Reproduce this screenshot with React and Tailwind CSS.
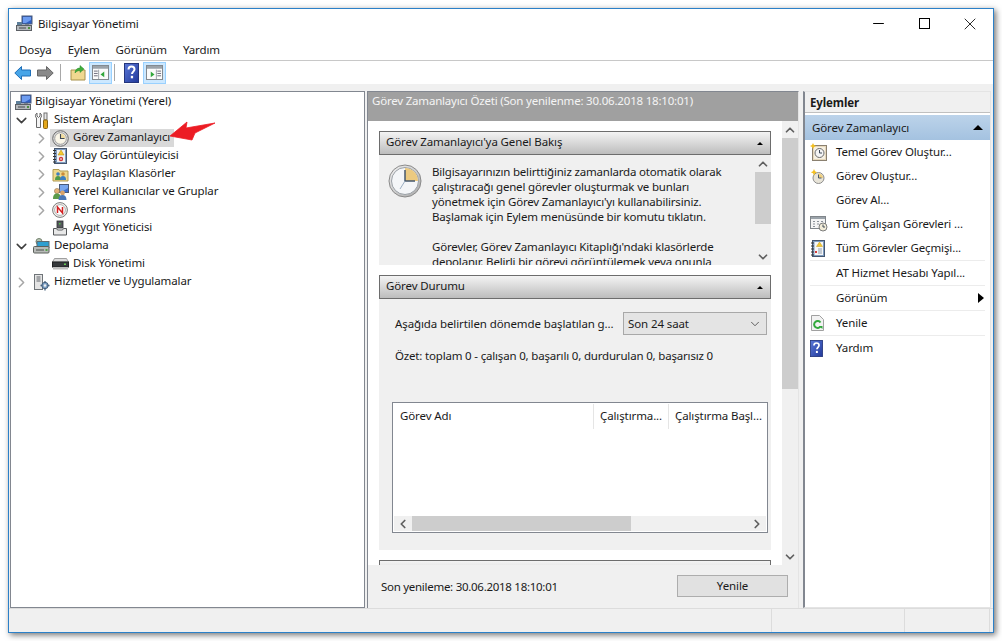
import React from "react";
import { ChevronRight, ChevronDown, ChevronUp, ChevronLeft, Minus, X } from "lucide-react";

const ComputerIcon = () => (
  <svg width="17" height="17" viewBox="0 0 17 17">
    <rect x="6" y="1" width="10" height="8" fill="#2f5fc4" stroke="#4a5a78" />
    <path d="M7 2h8v3l-5 3H7z" fill="#6d9cf0" />
    <rect x="9" y="9" width="4" height="2" fill="#7a8490" />
    <rect x="1" y="7" width="5" height="3" fill="#5d7f9a" />
    <rect x="0.5" y="10.5" width="15" height="5" fill="#b4b8bc" stroke="#5c6065" />
    <path d="M3 13h7" stroke="#44484c" />
    <rect x="12" y="12" width="2" height="2" fill="#4c8f3f" />
  </svg>
);

const ToolsIcon = () => (
  <svg width="16" height="17" viewBox="0 0 16 17">
    <path d="M3 1v3l1.500 1.500L6 4V1c2 1 2 4 .5 5v9.500h-4V6C1 5 1 2 3 1z" fill="#f4f4f4" stroke="#6a6a6a" />
    <rect x="10" y="1" width="3" height="7" fill="#e8e8e8" stroke="#707070" />
    <rect x="9.500" y="8" width="4" height="8.500" rx="1" fill="#e5a81c" stroke="#8a6510" />
  </svg>
);

const ClockIcon = () => (
  <svg width="17" height="17" viewBox="0 0 17 17">
    <circle cx="8.500" cy="8.500" r="7.800" fill="#dcdcdc" stroke="#6b6b6b" />
    <circle cx="8.500" cy="8.500" r="5.800" fill="#faf6e8" stroke="#a0a0a0" />
    <path d="M8.500 8.500V3.700A4.800 4.800 0 0 1 13.300 8.500z" fill="#f0dca0" />
    <path d="M8.500 4v4.500H12.500" fill="none" stroke="#3f4a58" strokeWidth="1.100" />
  </svg>
);

const EventIcon = () => (
  <svg width="16" height="16" viewBox="0 0 16 16">
    <rect x="2.500" y="0.500" width="12" height="15" fill="#7f9cc0" stroke="#45566e" />
    <rect x="5" y="2" width="8" height="12" fill="#f2f2f2" />
    <path d="M1 2.500h3M1 5.500h3M1 8.500h3M1 11.500h3M1 14h3" stroke="#333" />
    <path d="M9 2l3 5H6z" fill="#f6ca2e" stroke="#b08a10" strokeWidth="0.500" />
    <circle cx="9" cy="11" r="2.200" fill="#d23b3b" />
    <path d="M8 11h2" stroke="#fff" />
  </svg>
);

const HistoryIcon = () => (
  <svg width="16" height="17" viewBox="0 0 16 17">
    <rect x="2.500" y="0.500" width="12" height="16" fill="#7f9cc0" stroke="#45566e" />
    <rect x="4.500" y="2" width="8.500" height="13" fill="#f6f6f6" />
    <path d="M1 3h3M1 6h3M1 9h3M1 12h3M1 15h3" stroke="#333" />
    <path d="M9.500 2l3 4.500h-6z" fill="#f6ca2e" stroke="#c09a20" strokeWidth="0.500" />
    <path d="M8 9h4M8 11h4M8 13h4" stroke="#8c9cb0" />
    <rect x="5" y="11" width="2" height="2" fill="#d23b3b" />
  </svg>
);

const BasicTaskIcon = () => (
  <svg width="17" height="18" viewBox="0 0 17 18">
    <rect x="2.500" y="2.500" width="14" height="15" fill="#e6d8bc" stroke="#8a8070" />
    <rect x="4" y="4" width="11" height="12" fill="#f6f0e2" />
    <circle cx="9.500" cy="10" r="4.500" fill="#f4f4f4" stroke="#6b6b6b" />
    <path d="M9.500 7v3h2.500" fill="none" stroke="#3f4a58" />
    <path d="M3 0l1 2 2 1-2 1-1 2-1-2-2-1 2-1z" fill="#f4c020" />
  </svg>
);

const NewTaskIcon = () => (
  <svg width="16" height="17" viewBox="0 0 16 17">
    <circle cx="8.500" cy="10" r="5.500" fill="#e8e4d8" stroke="#8d8d8d" />
    <path d="M8.500 10V5.500A4.500 4.500 0 0 1 13 10z" fill="#f0d080" />
    <path d="M8.500 6.500V10h3" fill="none" stroke="#4a5868" />
    <path d="M4 1l1 2.200 2.200 1-2.200 1L4 7.500 3 5.200l-2.200-1 2.200-1z" fill="#f4c020" />
  </svg>
);

const RunningIcon = () => (
  <svg width="18" height="16" viewBox="0 0 18 16">
    <rect x="0.500" y="0.500" width="15" height="12" fill="#f4f4f4" stroke="#80858a" />
    <rect x="1" y="1" width="14" height="2" fill="#9ba3aa" />
    <path d="M3 5.500h2M7 5.500h2M11 5.500h2M3 8h2M7 8h2M3 10.500h2" stroke="#8a9098" />
    <circle cx="13" cy="11" r="4" fill="#f2ecd8" stroke="#7d7d7d" />
    <path d="M13 8.500V11h2" fill="none" stroke="#3f4a58" />
  </svg>
);

const RefreshIcon = () => (
  <svg width="15" height="16" viewBox="0 0 15 16">
    <path d="M1.500 0.500h8l4 4v11h-12z" fill="#f2f2f2" stroke="#a0a0a0" />
    <path d="M10.500 7.500a3.500 3.500 0 1 0 0 4" fill="none" stroke="#32a83c" strokeWidth="2" />
    <path d="M8.500 11h4v3z" fill="#32a83c" />
  </svg>
);

const SharedIcon = () => (
  <svg width="17" height="16" viewBox="0 0 17 16">
    <path d="M1 3.500h6l1 1.500h8v10H1z" fill="#efd88c" stroke="#b09a50" />
    <circle cx="6" cy="8" r="1.800" fill="#3d7fc0" />
    <path d="M3 14c0-3 1-4 3-4s3 1 3 4z" fill="#4f9a4a" />
    <circle cx="11" cy="8" r="1.800" fill="#c98a3a" />
    <path d="M8 14c0-3 1-4 3-4s3 1 3 4z" fill="#3d7fc0" />
  </svg>
);

const UsersIcon = () => (
  <svg width="17" height="17" viewBox="0 0 17 17">
    <rect x="7.500" y="0.500" width="9" height="8" fill="#3f72d0" stroke="#4a5a78" />
    <path d="M8 1h8v3l-5 3H8z" fill="#78a6ee" />
    <circle cx="5" cy="7" r="2.600" fill="#e2b27a" stroke="#8a6a42" strokeWidth="0.500" />
    <path d="M1 15c0-4 1.500-5.500 4-5.500S9 11 9 15z" fill="#5a9a4a" />
    <circle cx="10.500" cy="9" r="2.400" fill="#d8a46c" />
    <path d="M6.500 16c0-3.500 1.500-5 4-5s4 1.500 4 5z" fill="#4a78b8" />
  </svg>
);

const PerfIcon = () => (
  <svg width="16" height="16" viewBox="0 0 16 16">
    <circle cx="8" cy="8" r="7.400" fill="#f4f4f0" stroke="#7a7a7a" />
    <circle cx="8" cy="8" r="5.400" fill="#fff" stroke="#b0b0b0" />
    <path d="M5.500 11V5l5 6V5" fill="none" stroke="#d42020" strokeWidth="1.500" />
  </svg>
);

const DeviceIcon = () => (
  <svg width="16" height="16" viewBox="0 0 16 16">
    <rect x="5" y="1" width="6" height="7" fill="#55585c" stroke="#2e3033" strokeWidth="0.800" />
    <rect x="7" y="3" width="1.500" height="1.500" fill="#52c04a" />
    <path d="M1.500 8.500h3l1 1.500h5l1-1.500h3v6.500h-13z" fill="#e8e8e8" stroke="#54575a" />
  </svg>
);

const StorageIcon = () => (
  <svg width="17" height="16" viewBox="0 0 17 16">
    <circle cx="6" cy="3.500" r="3" fill="#b8c8b4" stroke="#74806f" />
    <rect x="4" y="3.500" width="12" height="6" fill="#2f9fd0" stroke="#5f6a70" />
    <rect x="0.500" y="8.500" width="15.500" height="6.500" rx="1" fill="#b8bbb8" stroke="#5c605c" />
    <path d="M3 12h8" stroke="#4a4e4a" />
    <rect x="12.500" y="11" width="2" height="2" fill="#56a04a" />
  </svg>
);

const DiskIcon = () => (
  <svg width="17" height="16" viewBox="0 0 17 16">
    <path d="M2.500 2.500h12l2 3.500H.5z" fill="#dcdcdc" stroke="#8a8a8a" strokeWidth="0.800" />
    <rect x="0.500" y="6" width="16" height="5" fill="#36393c" stroke="#1f2022" />
    <rect x="12" y="7.500" width="2" height="1.500" fill="#66cc55" />
    <rect x="1" y="11" width="15" height="2.500" fill="#bfbfbf" />
  </svg>
);

const ServicesIcon = () => (
  <svg width="16" height="17" viewBox="0 0 16 17">
    <rect x="0.500" y="0.500" width="8" height="15" fill="#e4e4e4" stroke="#6f7478" />
    <path d="M2.500 3h4M2.500 5h4M2.500 7h4" stroke="#62676c" />
    <circle cx="11" cy="11.500" r="3.200" fill="#7ea0c4" stroke="#46607c" />
    <circle cx="11" cy="11.500" r="1.200" fill="#f0f0f0" />
    <path d="M11 7v2M11 14v2.500M6.500 11.500h2M13.500 11.500h2" stroke="#46607c" strokeWidth="1.300" />
  </svg>
);

const HelpIcon = ({ w = 15, h = 20 }) => (
  <svg width={w} height={h} viewBox="0 0 15 20">
    <defs>
      <linearGradient id="helpFill" x1="0" y1="0" x2="1" y2="1">
        <stop offset="0" stopColor="#5a78d8" />
        <stop offset="1" stopColor="#22399a" />
      </linearGradient>
    </defs>
    <rect x="0.500" y="0.500" width="14" height="19" fill="url(#helpFill)" stroke="#24357c" />
    <path d="M4.500 6.500c0-2 1.300-3 3-3s3 1 3 2.800c0 2.200-2.500 2.400-2.500 4.700" fill="none" stroke="#fff" strokeWidth="2" />
    <rect x="6.800" y="12.800" width="2.300" height="2.500" fill="#fff" />
  </svg>
);

const PaneIcon = ({ flip }) => (
  <svg width="17" height="15" viewBox="0 0 18 16">
    <rect x="0.500" y="0.500" width="17" height="15" fill="#fbfbfb" stroke="#7c8288" />
    <rect x="1" y="1" width="16" height="3" fill="#9ba3aa" />
    {flip ? (
      <>
        <path d="M5 7v6l4-3z" fill="#32a83c" />
        <path d="M12 6.500h4M12 9h4M12 11.500h4" stroke="#667" />
        <path d="M11 5v10" stroke="#9aa0a6" />
      </>
    ) : (
      <>
        <path d="M13 7v6l-4-3z" fill="#32a83c" />
        <path d="M2 6.500h4M2 9h4M2 11.500h4" stroke="#667" />
        <path d="M7 5v10" stroke="#9aa0a6" />
      </>
    )}
  </svg>
);

const BigClock = () => (
  <svg width="34" height="34" viewBox="0 0 34 34">
    <defs>
      <linearGradient id="rimFill" x1="0" y1="0" x2="1" y2="1">
        <stop offset="0" stopColor="#f4f4f4" />
        <stop offset="1" stopColor="#a8a8a8" />
      </linearGradient>
    </defs>
    <circle cx="17" cy="17" r="16" fill="url(#rimFill)" stroke="#8a8a8a" />
    <circle cx="17" cy="17" r="13.500" fill="#f4f6f8" stroke="#9aa0a6" />
    <path d="M17 17V4A13 13 0 0 1 30 17z" fill="#ecca80" />
    <path d="M17 6v11h10" fill="none" stroke="#46586c" strokeWidth="1.500" />
    <path d="M17 17l-5 8" stroke="#9cb0c4" strokeWidth="1" />
  </svg>
);

const TreeRow = ({ level, open, arrow, icon, label, selected }) => (
  <div className={level === 0 ? "flex h-[18px] items-center pl-[3px]" : level === 1 ? "flex h-[18px] items-center pl-[5px]" : "flex h-[18px] items-center pl-[25px]"}>
    {level > 0 && (
      <span className="flex w-[10px] shrink-0 justify-center">
        {arrow && (open ? <ChevronDown size={17} strokeWidth={2.2} className="shrink-0 text-[#404040]" /> : <ChevronRight size={17} strokeWidth={2.2} className="shrink-0 text-[#a6a6a6]" />)}
      </span>
    )}
    <span className={level === 2 ? "ml-[4px] flex h-[18px] items-center" : "ml-[1px] flex h-[18px] items-center"}>
      <span className={selected ? "flex h-[18px] items-center bg-[#d9d9d9] pr-[4px]" : "flex h-[18px] items-center"}>
        <span className={level === 0 ? "flex w-[17px] justify-center" : level === 1 ? "ml-[5px] flex w-[19px] justify-center" : "ml-[1px] flex w-[18px] justify-center"}>{icon}</span>
        <span className={level === 2 ? "ml-[4px] pb-[2px]" : "ml-[3px] pb-[2px]"}>{label}</span>
      </span>
    </span>
  </div>
);

const ActionRow = ({ icon, label, line, more }) => (
  <div className={line ? "mx-[5px] flex h-[25px] items-center border-b border-[#ececec]" : "mx-[5px] flex h-[24px] items-center"}>
    <span className="flex w-[26px] justify-start">{icon}</span>
    <span className="flex-1 whitespace-nowrap">{label}</span>
    {more && <span className="mr-[1px] h-0 w-0 border-y-[5px] border-l-[6px] border-y-transparent border-l-black" />}
  </div>
);

const SectionHead = ({ title }) => (
  <div className="flex h-[24px] items-center justify-between border border-[#6d6d6d] bg-gradient-to-b from-[#f4f4f4] to-[#bdbdbd] pl-[6px] pr-[7px]">
    <span className="pb-[2px]">{title}</span>
    <span className="h-0 w-0 border-x-[3px] border-b-[3px] border-x-transparent border-b-black" />
  </div>
);

const App = () => {
  return (
    <div className="h-[641px] w-[1002px] overflow-hidden bg-white pl-[8px] pt-[8px] text-[11.5px] leading-[16px] tracking-[-0.11px] text-[#1a1a1a]" style={{ fontFamily: '"Noto Sans", sans-serif' }}>
      <div className="flex h-[625px] w-[986px] flex-col border border-[#2b80c8] bg-[#f0f0f0] shadow-[2px_2px_6px_rgba(0,0,0,0.55)]">
        {/* TITLE */}
        <div className="flex h-[29px] shrink-0 items-center justify-between bg-white pl-[7px]">
          <div className="flex items-center gap-[5px]">
            <ComputerIcon />
            <span>Bilgisayar Yönetimi</span>
          </div>
          <div className="flex items-center">
            <span className="flex w-[46px] justify-center"><Minus size={17} strokeWidth={1.4} className="text-black" /></span>
            <span className="flex w-[46px] justify-center"><span className="h-[11px] w-[11px] border border-black" /></span>
            <span className="flex w-[46px] justify-center"><X size={20} strokeWidth={1} className="text-black" /></span>
          </div>
        </div>

        {/* MENU */}
        <div className="flex h-[23px] shrink-0 items-center gap-[16px] border-b border-[#c8c8c8] bg-white pl-[10px] pt-[1px]">
          <span>Dosya</span>
          <span>Eylem</span>
          <span>Görünüm</span>
          <span>Yardım</span>
        </div>

        {/* TOOLBAR */}
        <div className="flex h-[23px] shrink-0 items-center bg-white pl-[4px]">
          <svg width="17" height="14" viewBox="0 0 17 14" className="ml-[1px]">
            <path d="M7.500 0.500L0.800 7l6.700 6.500V10h9V4h-9z" fill="#47a5e8" stroke="#1f6fb8" />
          </svg>
          <svg width="17" height="14" viewBox="0 0 17 14" className="ml-[6px]">
            <path d="M9.500 0.500L16.200 7l-6.700 6.500V10h-9V4h9z" fill="#8a8a8a" stroke="#666" />
          </svg>
          <span className="ml-[6px] h-[17px] w-px bg-[#a8a8a8]" />
          <svg width="16" height="17" viewBox="0 0 16 17" className="ml-[9px]">
            <path d="M1 6h14v10H1z" fill="#f0d890" stroke="#a8924c" />
            <path d="M5 9c0-3 2-5 5-5V1.500L14 5l-4 3.500V6.500C8 6.500 6 7.500 5 9z" fill="#3fae3c" stroke="#2a8a2a" strokeWidth="0.500" />
          </svg>
          <span className="ml-[3px] flex h-[22px] w-[23px] items-center justify-center border border-[#99d1ff] bg-[#cce8ff]"><PaneIcon /></span>
          <span className="ml-[2px] h-[17px] w-px bg-[#a8a8a8]" />
          <span className="ml-[9px] flex"><HelpIcon w={15} h={20} /></span>
          <span className="ml-[4px] flex h-[22px] w-[23px] items-center justify-center border border-[#99d1ff] bg-[#cce8ff]"><PaneIcon flip /></span>
        </div>

        {/* PANELS */}
        <div className="relative flex min-h-0 flex-1 gap-[2px] pl-px pr-[2px] pt-[7px]">
          {/* TREE */}
          <div className="h-[517px] w-[355px] shrink-0 border border-[#828790] bg-white pt-px">
            <TreeRow level={0} icon={<ComputerIcon />} label="Bilgisayar Yönetimi (Yerel)" />
            <TreeRow level={1} arrow open icon={<ToolsIcon />} label="Sistem Araçları" />
            <TreeRow level={2} arrow selected icon={<ClockIcon />} label="Görev Zamanlayıcı" />
            <TreeRow level={2} arrow icon={<EventIcon />} label="Olay Görüntüleyicisi" />
            <TreeRow level={2} arrow icon={<SharedIcon />} label="Paylaşılan Klasörler" />
            <TreeRow level={2} arrow icon={<UsersIcon />} label="Yerel Kullanıcılar ve Gruplar" />
            <TreeRow level={2} arrow icon={<PerfIcon />} label="Performans" />
            <TreeRow level={2} icon={<DeviceIcon />} label="Aygıt Yöneticisi" />
            <TreeRow level={1} arrow open icon={<StorageIcon />} label="Depolama" />
            <TreeRow level={2} icon={<DiskIcon />} label="Disk Yönetimi" />
            <TreeRow level={1} arrow icon={<ServicesIcon />} label="Hizmetler ve Uygulamalar" />
          </div>

          {/* CENTER */}
          <div className="flex h-[517px] w-[432px] shrink-0 flex-col border-l border-r border-t border-[#828790] border-r-[#e4e4e4]">
            <div className="h-[29px] shrink-0 bg-[#a0a0a0] pl-[4px] pt-[1px] tracking-[-0.2px] text-[#f4f4f4]">Görev Zamanlayıcı Özeti (Son yenilenme: 30.06.2018 18:10:01)</div>
            <div className="flex h-[444px] shrink-0">
              <div className="h-[444px] w-[414px] shrink-0 overflow-hidden bg-white pl-[11px] pt-[10px]">
                <div className="w-[392px]">
                  <SectionHead title="Görev Zamanlayıcı'ya Genel Bakış" />
                  <div className="flex h-[110px] overflow-hidden bg-[#f0f0f0]">
                    <div className="w-[376px] shrink-0 overflow-hidden">
                      <div className="flex pl-[9px] pt-[9px]">
                        <span className="w-[44px] shrink-0"><BigClock /></span>
                        <p className="w-[320px] whitespace-nowrap leading-[15px] tracking-[-0.18px]">
                          Bilgisayarınızın belirttiğiniz zamanlarda otomatik olarak<br />
                          çalıştıracağı genel görevler oluşturmak ve bunları<br />
                          yönetmek için Görev Zamanlayıcı'yı kullanabilirsiniz.<br />
                          Başlamak için Eylem menüsünde bir komutu tıklatın.<br /><br />
                          Görevler, Görev Zamanlayıcı Kitaplığı'ndaki klasörlerde<br />
                          depolanır. Belirli bir görevi görüntülemek veya onunla
                        </p>
                      </div>
                    </div>
                    <div className="flex w-[16px] shrink-0 flex-col items-center">
                      <span className="flex h-[17px] items-center"><ChevronUp size={14} strokeWidth={3} className="text-[#606060]" /></span>
                      <span className="h-[52px] w-full bg-[#cdcdcd]" />
                      <span className="flex-1" />
                      <span className="flex h-[17px] items-center"><ChevronDown size={14} strokeWidth={3} className="text-[#606060]" /></span>
                    </div>
                  </div>
                  <div className="h-[10px]" />
                  <SectionHead title="Görev Durumu" />
                  <div className="h-[251px] bg-[#f0f0f0] pl-[13px] pr-[3px] pt-[13px]">
                    <div className="flex h-[23px] items-center justify-between pl-[3px] pr-px">
                      <span className="whitespace-nowrap">Aşağıda belirtilen dönemde başlatılan g...</span>
                      <div className="flex h-[23px] w-[144px] items-center justify-between border border-[#a8a8a8] bg-[#e4e4e4] pl-[4px] pr-[4px]">
                        <span>Son 24 saat</span>
                        <ChevronDown size={14} strokeWidth={1.4} className="text-[#404040]" />
                      </div>
                    </div>
                    <p className="mt-[13px] pl-[3px] tracking-[-0.18px]">Özet: toplam 0 - çalışan 0, başarılı 0, durdurulan 0, başarısız 0</p>
                    <div className="mt-[38px] flex h-[131px] w-[376px] flex-col justify-between border border-[#828790] bg-white">
                      <div className="flex h-[26px] items-center">
                        <span className="flex h-[25px] w-[201px] items-center border-r border-[#e5e5e5] pl-[7px]">Görev Adı</span>
                        <span className="flex h-[25px] w-[75px] items-center whitespace-nowrap border-r border-[#e5e5e5] pl-[6px]">Çalıştırma...</span>
                        <span className="whitespace-nowrap pl-[6px]">Çalıştırma Başl...</span>
                      </div>
                      <div className="mx-px mb-px flex h-[15px] items-center bg-[#f0f0f0]">
                        <span className="flex w-[18px] justify-center"><ChevronLeft size={14} strokeWidth={3} className="text-[#606060]" /></span>
                        <span className="h-[15px] w-[219px] bg-[#cdcdcd]" />
                        <span className="flex-1" />
                        <span className="flex w-[18px] justify-center"><ChevronRight size={14} strokeWidth={3} className="text-[#606060]" /></span>
                      </div>
                    </div>
                  </div>
                  <div className="h-[10px]" />
                  <div className="h-[25px] border border-[#6d6d6d] bg-gradient-to-b from-[#f4f4f4] to-[#bdbdbd]" />
                </div>
              </div>
              <div className="flex h-[444px] w-[16px] shrink-0 flex-col items-center bg-[#f0f0f0]">
                <span className="flex h-[17px] items-center"><ChevronUp size={14} strokeWidth={3} className="text-[#606060]" /></span>
                <span className="h-[251px] w-full bg-[#cdcdcd]" />
                <span className="flex-1" />
                <span className="flex h-[17px] items-center"><ChevronDown size={14} strokeWidth={3} className="text-[#606060]" /></span>
              </div>
            </div>
            <div className="flex flex-1 items-start justify-between bg-[#f0f0f0] pl-[13px] pr-[10px] pt-[10px]">
              <span className="mt-[4px] tracking-[-0.28px]">Son yenileme: 30.06.2018 18:10:01</span>
              <span className="flex h-[22px] w-[111px] items-center justify-center border border-[#adadad] bg-[#e1e1e1]">Yenile</span>
            </div>
          </div>

          {/* ACTIONS */}
          <div className="ml-[2px] h-[517px] w-[188px] shrink-0 border border-l-2 border-[#e4e4e4] border-l-[#828790] bg-white">
            <div className="flex h-[21px] items-center border-b border-[#c0c0c0] bg-[#f0f0f0] pl-[5px] pt-[2px] font-bold">Eylemler</div>
            <div className="mt-[2px] flex h-[25px] items-center justify-between bg-gradient-to-b from-[#bcd3ea] to-[#a4c2e0] pl-[7px] pr-[7px]">
              <span>Görev Zamanlayıcı</span>
              <span className="h-0 w-0 border-x-[5px] border-b-[5px] border-x-transparent border-b-black" />
            </div>
            <div>
              <ActionRow icon={<BasicTaskIcon />} label="Temel Görev Oluştur..." />
              <ActionRow icon={<NewTaskIcon />} label="Görev Oluştur..." />
              <ActionRow label="Görev Al..." />
              <ActionRow icon={<RunningIcon />} label="Tüm Çalışan Görevleri ..." />
              <ActionRow line icon={<HistoryIcon />} label="Tüm Görevler Geçmişi..." />
              <ActionRow line label="AT Hizmet Hesabı Yapıl..." />
              <ActionRow line label="Görünüm" more />
              <ActionRow line icon={<RefreshIcon />} label="Yenile" />
              <ActionRow icon={<HelpIcon w={13} h={17} />} label="Yardım" />
            </div>
          </div>

          {/* arrow overlay */}
          <svg width="46" height="22" viewBox="0 0 46 22" className="absolute left-[161px] top-[36px]">
            <path d="M0 16L17 2l-1 6 29-5-20 10-3 7z" fill="#ec1c24" stroke="#ec1c24" strokeWidth="0.800" strokeLinejoin="round" />
          </svg>
        </div>

        {/* STATUS */}
        <div className="flex h-[24px] shrink-0 border-t border-[#dcdcdc] bg-[#f0f0f0]">
          <span className="w-[763px] border-r border-[#dcdcdc]" />
          <span className="w-[133px] border-r border-[#dcdcdc]" />
          <span className="w-[85px] border-r border-[#dcdcdc]" />
        </div>
      </div>
    </div>
  );
};

export default App;
